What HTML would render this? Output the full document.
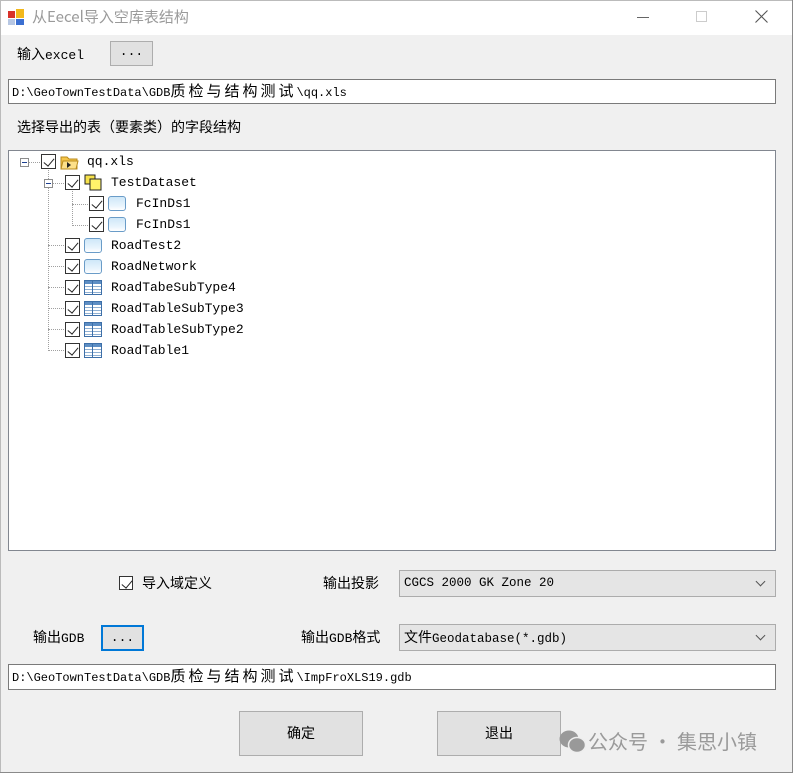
<!DOCTYPE html>
<html><head><meta charset="utf-8"><style>
*{margin:0;padding:0;box-sizing:border-box}
body{width:793px;height:773px;overflow:hidden;background:#fff;font-family:"Liberation Mono","Noto Serif CJK SC",monospace;position:relative}
.win{position:absolute;left:0;top:0;width:793px;height:773px;box-shadow:inset -1px -1px 0 #8a8a8a,inset 1px 1px 0 #bbb;background:#f0f0f0}
.tb{position:absolute;left:1px;top:1px;width:791px;height:34px;background:#fff}
.abs{position:absolute}
.c{font-family:"Noto Sans CJK SC",sans-serif}
.lbl{font-size:13px;color:#000;white-space:nowrap}
.tx{position:absolute;background:#fff;border:1px solid #7a7a7a;font-size:12px;line-height:22px;padding-left:3px;white-space:nowrap}
.tx .c{font-size:15px;letter-spacing:3px}
.btn{position:absolute;background:#e1e1e1;border:1px solid #adadad;text-align:center;font-size:13px}
.combo{position:absolute;background:#e5e5e5;border:1px solid #acacac;font-size:12.5px;line-height:24px;padding-left:4px;white-space:nowrap}
.combo:after{content:"";position:absolute;right:11px;top:7px;width:6px;height:6px;border-right:1.3px solid #555;border-bottom:1.3px solid #555;transform:rotate(45deg)}
.tree{position:absolute;left:8px;top:150px;width:768px;height:401px;background:#fff;border:1px solid #828790}
.row{position:absolute;height:20px;font-size:13px;line-height:20px;white-space:nowrap}
.cb{position:absolute;width:15px;height:15px;border:1px solid #333;background:#fff}
.cb:after{content:"";position:absolute;left:4px;top:1px;width:5px;height:9px;border-right:1.5px solid #222;border-bottom:1.5px solid #222;transform:rotate(40deg)}
.fc{position:absolute;width:18px;height:15px;border:1px solid #6a9cc8;border-radius:3px;background:linear-gradient(#cfe7f8,#eaf5fd 70%,#fff)}
.tbl{position:absolute;width:18px;height:15px;border:1px solid #3d6fa8;background:repeating-linear-gradient(#fff 0 2px,#8fb0d3 2px 3px);}
.tbl:before{content:"";position:absolute;left:0;top:0;width:16px;height:3px;background:#5d8ec4}
.tbl:after{content:"";position:absolute;left:7px;top:0;width:1px;height:13px;background:#3d6fa8}
.dl{position:absolute;border-color:#a0a0a0;border-style:dotted;border-width:0}
.pm{position:absolute;width:9px;height:9px;border:1px solid #8c8c8c;background:#fff}
.pm:after{content:"";position:absolute;left:1px;top:3px;width:5px;height:1px;background:#1c3f90}
</style></head><body>
<div class="win">
<div class="tb">
 <svg class="abs" style="left:7px;top:8px" width="16" height="16"><rect x="0" y="2" width="7" height="7" fill="#d8322a"/><rect x="8" y="0" width="8" height="9" fill="#f2b81c"/><rect x="0" y="10" width="7" height="6" fill="#b7c7e3"/><rect x="8" y="10" width="8" height="6" fill="#3b6fd1"/></svg>
 <div class="abs c" style="left:31px;top:5px;font-size:15px;color:#9a9a9a">从Eecel导入空库表结构</div>
 <div class="abs" style="left:636px;top:16px;width:12px;height:1px;background:#666"></div>
 <div class="abs" style="left:695px;top:10px;width:11px;height:11px;border:1px solid #ccc"></div>
 <svg class="abs" style="left:754px;top:9px" width="13" height="13"><path d="M0.5 0.5L12.5 12.5M12.5 0.5L0.5 12.5" stroke="#555" stroke-width="1.1"/></svg>
</div>
<div class="abs lbl" style="left:17px;top:44px"><span class="c" style="font-size:14px">输入</span>excel</div>
<div class="btn" style="left:110px;top:41px;width:43px;height:25px;line-height:20px">...</div>
<div class="tx" style="left:8px;top:79px;width:768px;height:25px">D:\GeoTownTestData\GDB<span class="c">质检与结构测试</span>\qq.xls</div>
<div class="abs lbl c" style="left:17px;top:117px;font-size:14px">选择导出的表（要素类）的字段结构</div>
<div class="tree">
 <div class="dl" style="left:39px;top:17px;height:183px;border-left-width:1px"></div>
 <div class="dl" style="left:39px;top:199px;width:18px;border-top-width:1px"></div>
 <div class="dl" style="left:39px;top:94px;width:18px;border-top-width:1px"></div>
 <div class="dl" style="left:39px;top:115px;width:18px;border-top-width:1px"></div>
 <div class="dl" style="left:39px;top:136px;width:18px;border-top-width:1px"></div>
 <div class="dl" style="left:39px;top:157px;width:18px;border-top-width:1px"></div>
 <div class="dl" style="left:39px;top:178px;width:18px;border-top-width:1px"></div>
 <div class="dl" style="left:63px;top:38px;height:37px;border-left-width:1px"></div>
 <div class="dl" style="left:63px;top:53px;width:18px;border-top-width:1px"></div>
 <div class="dl" style="left:63px;top:74px;width:18px;border-top-width:1px"></div>
 <div class="dl" style="left:19px;top:11px;width:12px;border-top-width:1px"></div>
 <div class="dl" style="left:43px;top:32px;width:12px;border-top-width:1px"></div>
 <div class="pm" style="left:11px;top:7px"></div>
 <div class="pm" style="left:35px;top:28px"></div>

 <div class="cb" style="left:32px;top:3px"></div>
 <svg class="abs" style="left:51px;top:3px" width="20" height="16"><path d="M1 3h6l2 2h8v10H1z" fill="#f5c54a" stroke="#b98a1c"/><path d="M3 7h15l-2 8H1z" fill="#fde08a" stroke="#b98a1c"/><path d="M7 8l4 3-4 3z" fill="#222"/></svg>
 <div class="row" style="left:78px;top:1px">qq.xls</div>

 <div class="cb" style="left:56px;top:24px"></div>
 <svg class="abs" style="left:75px;top:23px" width="20" height="18"><rect x="1" y="1" width="10" height="9" fill="#f6e14a" stroke="#222"/><rect x="6" y="5" width="11" height="11" fill="#fff36a" stroke="#222"/></svg>
 <div class="row" style="left:102px;top:22px">TestDataset</div>

 <div class="cb" style="left:80px;top:45px"></div><div class="fc" style="left:99px;top:45px"></div>
 <div class="row" style="left:127px;top:43px">FcInDs1</div>
 <div class="cb" style="left:80px;top:66px"></div><div class="fc" style="left:99px;top:66px"></div>
 <div class="row" style="left:127px;top:64px">FcInDs1</div>

 <div class="cb" style="left:56px;top:87px"></div><div class="fc" style="left:75px;top:87px"></div>
 <div class="row" style="left:102px;top:85px">RoadTest2</div>
 <div class="cb" style="left:56px;top:108px"></div><div class="fc" style="left:75px;top:108px"></div>
 <div class="row" style="left:102px;top:106px">RoadNetwork</div>
 <div class="cb" style="left:56px;top:129px"></div><div class="tbl" style="left:75px;top:129px"></div>
 <div class="row" style="left:102px;top:127px">RoadTabeSubType4</div>
 <div class="cb" style="left:56px;top:150px"></div><div class="tbl" style="left:75px;top:150px"></div>
 <div class="row" style="left:102px;top:148px">RoadTableSubType3</div>
 <div class="cb" style="left:56px;top:171px"></div><div class="tbl" style="left:75px;top:171px"></div>
 <div class="row" style="left:102px;top:169px">RoadTableSubType2</div>
 <div class="cb" style="left:56px;top:192px"></div><div class="tbl" style="left:75px;top:192px"></div>
 <div class="row" style="left:102px;top:190px">RoadTable1</div>
</div>

<div class="cb" style="left:119px;top:576px;width:14px;height:14px"></div>
<div class="abs lbl c" style="left:142px;top:573px;font-size:14px">导入域定义</div>
<div class="abs lbl c" style="left:323px;top:573px;font-size:14px">输出投影</div>
<div class="combo" style="left:399px;top:570px;width:377px;height:27px">CGCS 2000 GK Zone 20</div>

<div class="abs lbl" style="left:33px;top:627px"><span class="c" style="font-size:14px">输出</span>GDB</div>
<div class="btn" style="left:101px;top:625px;width:43px;height:26px;line-height:22px;border:2px solid #0078d7">...</div>
<div class="abs lbl" style="left:301px;top:627px"><span class="c" style="font-size:14px">输出</span>GDB<span class="c" style="font-size:14px">格式</span></div>
<div class="combo" style="left:399px;top:624px;width:377px;height:27px"><span class="c" style="font-size:14px">文件</span>Geodatabase(*.gdb)</div>

<div class="tx" style="left:8px;top:664px;width:768px;height:26px">D:\GeoTownTestData\GDB<span class="c">质检与结构测试</span>\ImpFroXLS19.gdb</div>

<div class="btn c" style="left:239px;top:711px;width:124px;height:45px;line-height:43px;font-size:14px">确定</div>
<div class="btn c" style="left:437px;top:711px;width:124px;height:45px;line-height:43px;font-size:14px">退出</div>

<svg class="abs" style="left:559px;top:729px" width="28" height="26"><ellipse cx="10" cy="10" rx="9.5" ry="8.5" fill="#999"/><ellipse cx="18" cy="16" rx="8.5" ry="7.5" fill="#999" stroke="#eee" stroke-width="1.5"/></svg>
<div class="abs c" style="left:588px;top:726px;font-size:20px;color:#9a9a9a;white-space:nowrap">公众号 · 集思小镇</div>
</div>
</body></html>
